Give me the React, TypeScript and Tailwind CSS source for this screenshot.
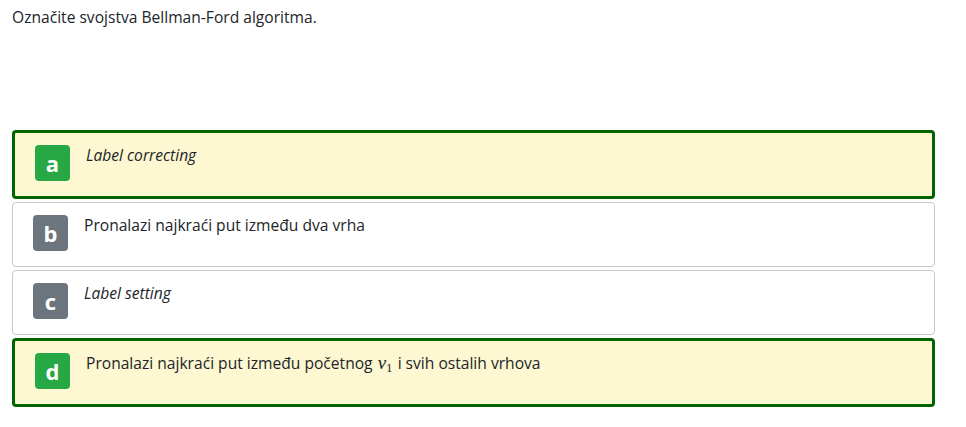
const options = [
  { key: "a", correct: true, italic: true, text: "Label correcting" },
  { key: "b", correct: false, italic: false, text: "Pronalazi najkraći put između dva vrha" },
  { key: "c", correct: false, italic: true, text: "Label setting" },
  { key: "d", correct: true, italic: false, text: "math" },
];

function OptionText({ text }: { text: string }) {
  if (text !== "math") return <>{text}</>;
  return (
    <>
      Pronalazi najkraći put između početnog{" "}
      <span className="mx-[1px] font-['Liberation_Serif',serif] text-[19px] italic">
        v<sub className="text-[13px] not-italic">1</sub>
      </span>{" "}
      i svih ostalih vrhova
    </>
  );
}

export default function App() {
  return (
    <div className="min-h-[427px] bg-white px-3 pt-[5px] font-['Open_Sans',sans-serif] text-[15.6px] text-[#212529]">
      <p className="leading-6">Označite svojstva Bellman-Ford algoritma.</p>

      <div className="mt-[101px] flex w-[923px] flex-col gap-[3px]">
        {options.map((o) => (
          <div
            key={o.key}
            className={
              o.correct
                ? "flex h-[69px] items-start rounded-[4px] border-[3px] border-[#006400] bg-[#fdf8d2] pl-5 pt-[10px]"
                : "flex h-[65px] items-start rounded-[4px] border border-[#c8c8c8] bg-white pl-5 pt-[10px]"
            }
          >
            <div
              className={
                o.correct
                  ? "mt-[2px] flex h-9 w-[35px] shrink-0 items-center justify-center rounded-[4px] bg-[#28a745] text-[22px] font-bold text-white"
                  : "mt-[2px] flex h-9 w-[35px] shrink-0 items-center justify-center rounded-[4px] bg-[#6c757d] text-[22px] font-bold text-white"
              }
            >
              {o.key}
            </div>
            <div className={o.italic ? "ml-4 leading-6 italic" : "ml-4 leading-6"}>
              <OptionText text={o.text} />
            </div>
          </div>
        ))}
      </div>
    </div>
  );
}
